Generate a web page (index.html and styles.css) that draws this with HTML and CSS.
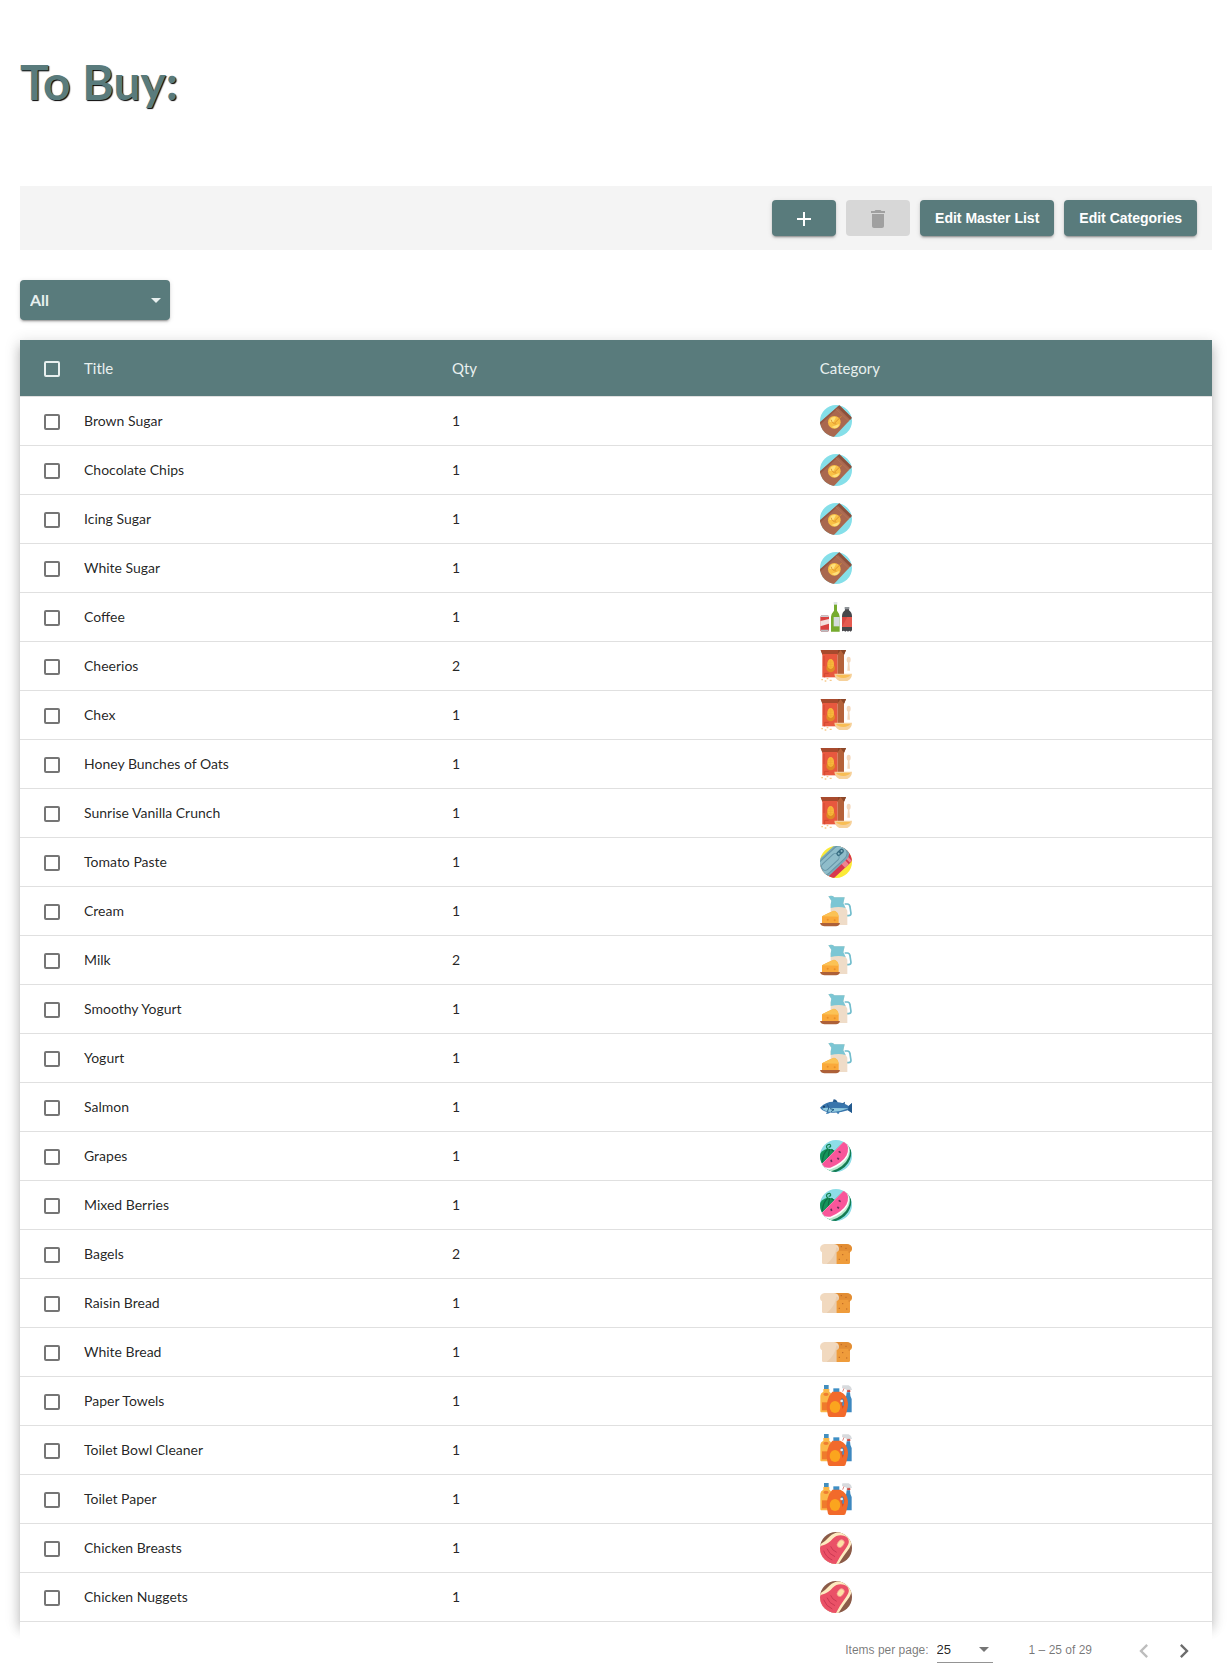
FILE: index.html
```html
<!DOCTYPE html>
<html lang="en">
<head>
<meta charset="utf-8">
<meta name="viewport" content="width=device-width, initial-scale=1">
<title>To Buy</title>
<link rel="stylesheet" href="styles.css">
</head>
<body>
<svg class="sprite" aria-hidden="true">
  <defs>
    <clipPath id="disc"><circle cx="48" cy="48" r="48"/></clipPath>
  </defs>
  <symbol id="baking" viewBox="0 0 96 96">
    <g clip-path="url(#disc)">
      <rect width="96" height="96" fill="#85dfe9"/>
      <path d="M-4 55 58 1 96 38 40 98 8 92z" fill="#a9684f"/>
      <path d="M-4 55 58 1 60 4 0 59z" fill="#955743"/>
      <path d="M58 1 96 38 91 44 52 7z" fill="#8c503c"/>
      <path d="M48 12 87 49" stroke="#b9775c" stroke-width="2"/>
      <circle cx="43" cy="52" r="19" fill="#f9c044"/>
      <path d="M28 50a15 15 0 0 1 20-13l-8 15zM34 66l24-9a16 16 0 0 1-14 13z" fill="#fde07c"/>
      <path d="M33 44q4 13 16 13M44 54 64 34" stroke="#dc9430" stroke-width="3" fill="none"/>
    </g>
  </symbol>
  <symbol id="drinks" viewBox="0 0 96 96">
    <path d="M4 43h20l3 5v40l-3 4H4l-3-4V48z" fill="#d9413f"/>
    <path d="M4 43h20l3 5H1z" fill="#c9d0d4"/>
    <path d="M1 60 27 54v14L1 76z" fill="#f3dfdc"/>
    <path d="M1 86h26l-3 6H4z" fill="#b9bfc3"/>
    <path d="M42 5h9v24q8 10 8 18v45H33V47q0-8 9-18z" fill="#76ab2f"/>
    <path d="M41 3h11v8H41z" fill="#dfe5e5"/>
    <path d="M41 48h18v28H41z" fill="#d4dbdc"/>
    <path d="M75 19h12v9q9 6 9 18v42l-4 4-4-3-4 3-4-3-4 3-4-3-6 2V46q0-12 9-18z" fill="#47474b"/>
    <path d="M74 18h14v7H74z" fill="#8f9498"/>
    <path d="M66 48h30v30H66z" fill="#d94843"/>
    <path d="M82 48h14v30H66z" fill="#e65a50"/>
  </symbol>
  <symbol id="cereal" viewBox="0 0 96 96">
    <path d="M2 0h76l-6 14H7z" fill="#8f4527"/>
    <path d="M7 12h46v70H7z" fill="#e8583e"/>
    <path d="M2 0h52v12H7z" fill="#a84a2d"/>
    <path d="M53 12 62 0l10 12v70H53z" fill="#b5623a"/>
    <path d="M62 0h16l-6 14z" fill="#8b4728"/>
    <circle cx="32" cy="54" r="13" fill="#e08a26"/>
    <ellipse cx="32" cy="42" rx="10" ry="15" fill="#f9b93c"/>
    <path d="M24 36h16M23 43h18M25 50h14M32 28v28" stroke="#eeaa35" stroke-width="2"/>
    <path d="M14 82V70h12M12 18v30" stroke="#d24732" stroke-width="3" fill="none"/>
    <ellipse cx="86" cy="29" rx="6" ry="9" fill="#f4d8bd"/>
    <path d="M84 34h4l2 28h-8z" fill="#f4d8bd"/>
    <path d="M43 71h53q0 15-14 22H58q-14-7-15-22z" fill="#f6d19b"/>
    <path d="M48 75h43q-5 8-21 9-17-1-22-9z" fill="#f8be55"/>
    <path d="M4 89h5M14 93h5M20 86h5M29 91h6" stroke="#f6c98b" stroke-width="4"/>
  </symbol>
  <symbol id="canned" viewBox="0 0 96 96">
    <g clip-path="url(#disc)">
      <rect width="96" height="96" fill="#fbea37"/>
      <g transform="rotate(-43 46 46)">
        <rect x="-24" y="20" width="124" height="60" rx="26" fill="#d8364f"/>
        <path d="M54 60h16v20H54zM75 60h8v18h-8z" fill="#ee8490"/>
        <rect x="-24" y="9" width="124" height="56" rx="26" fill="#7ba9b8"/>
        <rect x="-14" y="15" width="108" height="44" rx="21" fill="#8fbdca" stroke="#6796a8" stroke-width="3"/>
        <rect x="2" y="26" width="64" height="22" rx="11" fill="none" stroke="#6796a8" stroke-width="3"/>
        <rect x="62" y="29" width="26" height="14" rx="7" fill="#386d82"/>
        <circle cx="69" cy="36" r="3" fill="#8fbdca"/>
        <circle cx="81" cy="36" r="3" fill="#8fbdca"/>
      </g>
    </g>
  </symbol>
  <symbol id="dairy" viewBox="0 0 96 96">
    <path d="M74 27h8q7 0 8 9l3 19q0 7-8 7h-7" stroke="#72bdcd" stroke-width="5" fill="none"/>
    <path d="M25 4q12-4 18 3h31l-4 20 12 20v43H32V30L34 17z" fill="#efdcc8"/>
    <path d="M25 4q12-4 18 3h31l-4 18 7 14q-20-6-45 0V28l2-11z" fill="#7cc6d4"/>
    <path d="M6 64Q24 53 42 47q12 3 14 18v20H6z" fill="#faa93a"/>
    <path d="M6 64 42 47q12 3 14 18z" fill="#fbc255"/>
    <circle cx="23" cy="74" r="3" fill="#e98e28"/><circle cx="44" cy="76" r="3" fill="#e98e28"/>
    <path d="M0 84h60q-3 10-12 10H14Q3 94 0 84z" fill="#ad6038"/>
  </symbol>
  <symbol id="fish" viewBox="0 0 96 96">
    <path d="m38 34 3-9q10 1 12 10l16 1 6-4-1 8z" fill="#24598c"/>
    <path d="M22 60l-4 9q12 0 14-9zM48 62l6 8q6-2 4-10z" fill="#3f80b5"/>
    <path d="M0 50Q20 30 46 33q26 2 40 12l10-9v30l-12-8Q62 66 36 65 10 64 0 50z" fill="#3875ac"/>
    <path d="M6 53q10-4 26-2l54 1q-24 10-48 11Q14 62 6 53z" fill="#91cbe0"/>
    <path d="m86 45 10-9v30l-12-8z" fill="#245a8e"/>
    <path d="M22 40q9 10 0 22M30 53l12 3-9 6" stroke="#265b89" stroke-width="3" fill="none"/>
    <circle cx="12" cy="47" r="3" fill="#173c5c"/>
  </symbol>
  <symbol id="fruit" viewBox="0 0 96 96">
    <g clip-path="url(#disc)">
      <rect width="96" height="96" fill="#8ddde7"/>
      <circle cx="26" cy="55" r="29" fill="#15955b"/>
      <path d="M24 27Q8 40 7 67M29 27Q25 40 24 62M34 28q12 8 14 14" stroke="#0c7046" stroke-width="4" fill="none"/>
      <path d="M27 30q-12-9-5-15 9-5 10 3-2 6-6 2" stroke="#15844f" stroke-width="4" fill="none"/>
      <path d="M76 0q26 26 14 58T34 100Q14 104-2 78z" fill="#137c53"/>
      <path d="M76 0q22 26 9 54T34 94Q16 98 0 78z" fill="#b9e9ce"/>
      <path d="M76 0q18 27 6 50T32 88Q14 91 0 78z" fill="#fff"/>
      <path d="M76 0q15 26 3 47T31 83Q16 85 0 78z" fill="#f8569a"/>
      <path d="m56 34 6 4M52 54l5 4M33 59l2 7" stroke="#6e2c59" stroke-width="5"/>
    </g>
  </symbol>
  <symbol id="bread" viewBox="0 0 96 96">
    <path d="M24 18h56q16 2 16 15 0 7-6 10v31q0 4-4 4H44z" fill="#ef9c3b"/>
    <path d="M48 18h32q16 2 16 15l-4 5H52z" fill="#e28d34"/>
    <path d="M14 18h28q15 2 15 15 0 6-8 10v35H10q-4 0-4-4V43q-6-3-6-11 1-12 14-14z" fill="#f1d9bf"/>
    <path d="M49 28q-2 28-29 50h29V43q8-4 8-10z" fill="#eacdae"/>
    <path d="M62 26h4M76 31h4M86 42h3M66 50h4M56 64h4M78 66h4" stroke="#bd6725" stroke-width="3"/>
  </symbol>
  <symbol id="cleaning" viewBox="0 0 96 96">
    <path d="M12 0h14v13H12z" fill="#438fbe"/>
    <path d="M10 12h18v8q8 4 8 14v48H3q-3-2-2-8V32q0-8 9-12z" fill="#fbb748"/>
    <path d="M6 52h24v24H6z" fill="#ef7b2c"/>
    <ellipse cx="18" cy="28" rx="8" ry="5" fill="#ee7e31"/>
    <path d="M67 1h19q9 4 10 14H80l-8-5h-6z" fill="#d7dadd"/>
    <path d="m72 10-4 10M82 16h8v5h-8z" stroke="#c84a42" stroke-width="2" fill="#c84a42"/>
    <path d="M80 22h10q0 12 5 20v40H74V42q6-8 6-20z" fill="#3d88bf"/>
    <path d="M40 10h18v12H40z" fill="#3e8fc5"/>
    <path d="M37 20h24q20 8 23 34 1 12-8 40-2 2-5 2H30q-4 0-6-4-7-28-1-46 4-16 14-26z" fill="#f26a2b"/>
    <ellipse cx="45" cy="66" rx="16" ry="18" fill="#fba51e"/>
    <path d="M64 38q10 2 9 18l-5 16q-6-16-4-34z" fill="#d0502a"/>
    <path d="M65 42q6 4 4 20" stroke="#4d91c4" stroke-width="5" fill="none"/>
    <circle cx="65" cy="48" r="4" fill="#e6f1f7"/>
  </symbol>
  <symbol id="meat" viewBox="0 0 96 96">
    <g clip-path="url(#disc)">
      <rect width="96" height="96" fill="#8b5b48"/>
      <path d="M-4 40Q16 28 28 14 46-4 70 2q32 8 24 34-3 10-14 24T52 102L-8 94z" fill="#fdebc0"/>
      <path d="M2 42Q28 34 38 20q14-14 34-9 17 6 14 22-2 8-14 24T48 96H18Q-10 70 2 42z" fill="#ea5167"/>
      <ellipse cx="62" cy="35" rx="9" ry="13" transform="rotate(38 62 35)" fill="#fde0a5" stroke="#f18a8a" stroke-width="2"/>
      <path d="M32 43q4 12 18 18M21 50q6 17 24 24M11 56q7 20 26 28" stroke="#c93a53" stroke-width="3" fill="none"/>
    </g>
  </symbol>
</svg>

<main class="page">
  <h1 class="page-title">To Buy:</h1>

  <div class="toolbar">
    <button class="btn btn-icon" type="button" aria-label="Add item">
      <svg class="icon" viewBox="0 0 24 24"><path d="M19 13h-6v6h-2v-6H5v-2h6V5h2v6h6v2z"/></svg>
    </button>
    <button class="btn btn-icon" type="button" aria-label="Delete selected" disabled>
      <svg class="icon" viewBox="0 0 24 24"><path d="M6 19c0 1.1.9 2 2 2h8c1.1 0 2-.9 2-2V7H6v12zM19 4h-3.5l-1-1h-5l-1 1H5v2h14V4z"/></svg>
    </button>
    <button class="btn" type="button">Edit Master List</button>
    <button class="btn" type="button">Edit Categories</button>
  </div>

  <div class="filter">
    <select class="filter-select" aria-label="Filter by category"><option>All</option></select>
    <svg class="caret" viewBox="0 0 10 5" aria-hidden="true"><path d="M0 0h10L5 5z"/></svg>
  </div>

  <table class="items">
    <thead>
      <tr><th class="col-check"><input class="check" type="checkbox" aria-label="Select all"></th><th>Title</th><th>Qty</th><th class="col-category">Category</th></tr>
    </thead>
    <tbody>
      <tr><td><input class="check" type="checkbox" aria-label="Brown Sugar"></td><td class="text">Brown Sugar</td><td class="text">1</td><td><svg class="cat" role="img" aria-label="Baking"><use href="#baking"/></svg></td></tr>
      <tr><td><input class="check" type="checkbox" aria-label="Chocolate Chips"></td><td class="text">Chocolate Chips</td><td class="text">1</td><td><svg class="cat" role="img" aria-label="Baking"><use href="#baking"/></svg></td></tr>
      <tr><td><input class="check" type="checkbox" aria-label="Icing Sugar"></td><td class="text">Icing Sugar</td><td class="text">1</td><td><svg class="cat" role="img" aria-label="Baking"><use href="#baking"/></svg></td></tr>
      <tr><td><input class="check" type="checkbox" aria-label="White Sugar"></td><td class="text">White Sugar</td><td class="text">1</td><td><svg class="cat" role="img" aria-label="Baking"><use href="#baking"/></svg></td></tr>
      <tr><td><input class="check" type="checkbox" aria-label="Coffee"></td><td class="text">Coffee</td><td class="text">1</td><td><svg class="cat" role="img" aria-label="Drinks"><use href="#drinks"/></svg></td></tr>
      <tr><td><input class="check" type="checkbox" aria-label="Cheerios"></td><td class="text">Cheerios</td><td class="text">2</td><td><svg class="cat" role="img" aria-label="Cereal"><use href="#cereal"/></svg></td></tr>
      <tr><td><input class="check" type="checkbox" aria-label="Chex"></td><td class="text">Chex</td><td class="text">1</td><td><svg class="cat" role="img" aria-label="Cereal"><use href="#cereal"/></svg></td></tr>
      <tr><td><input class="check" type="checkbox" aria-label="Honey Bunches of Oats"></td><td class="text">Honey Bunches of Oats</td><td class="text">1</td><td><svg class="cat" role="img" aria-label="Cereal"><use href="#cereal"/></svg></td></tr>
      <tr><td><input class="check" type="checkbox" aria-label="Sunrise Vanilla Crunch"></td><td class="text">Sunrise Vanilla Crunch</td><td class="text">1</td><td><svg class="cat" role="img" aria-label="Cereal"><use href="#cereal"/></svg></td></tr>
      <tr><td><input class="check" type="checkbox" aria-label="Tomato Paste"></td><td class="text">Tomato Paste</td><td class="text">1</td><td><svg class="cat" role="img" aria-label="Canned goods"><use href="#canned"/></svg></td></tr>
      <tr><td><input class="check" type="checkbox" aria-label="Cream"></td><td class="text">Cream</td><td class="text">1</td><td><svg class="cat" role="img" aria-label="Dairy"><use href="#dairy"/></svg></td></tr>
      <tr><td><input class="check" type="checkbox" aria-label="Milk"></td><td class="text">Milk</td><td class="text">2</td><td><svg class="cat" role="img" aria-label="Dairy"><use href="#dairy"/></svg></td></tr>
      <tr><td><input class="check" type="checkbox" aria-label="Smoothy Yogurt"></td><td class="text">Smoothy Yogurt</td><td class="text">1</td><td><svg class="cat" role="img" aria-label="Dairy"><use href="#dairy"/></svg></td></tr>
      <tr><td><input class="check" type="checkbox" aria-label="Yogurt"></td><td class="text">Yogurt</td><td class="text">1</td><td><svg class="cat" role="img" aria-label="Dairy"><use href="#dairy"/></svg></td></tr>
      <tr><td><input class="check" type="checkbox" aria-label="Salmon"></td><td class="text">Salmon</td><td class="text">1</td><td><svg class="cat" role="img" aria-label="Fish"><use href="#fish"/></svg></td></tr>
      <tr><td><input class="check" type="checkbox" aria-label="Grapes"></td><td class="text">Grapes</td><td class="text">1</td><td><svg class="cat" role="img" aria-label="Fruit"><use href="#fruit"/></svg></td></tr>
      <tr><td><input class="check" type="checkbox" aria-label="Mixed Berries"></td><td class="text">Mixed Berries</td><td class="text">1</td><td><svg class="cat" role="img" aria-label="Fruit"><use href="#fruit"/></svg></td></tr>
      <tr><td><input class="check" type="checkbox" aria-label="Bagels"></td><td class="text">Bagels</td><td class="text">2</td><td><svg class="cat" role="img" aria-label="Bread"><use href="#bread"/></svg></td></tr>
      <tr><td><input class="check" type="checkbox" aria-label="Raisin Bread"></td><td class="text">Raisin Bread</td><td class="text">1</td><td><svg class="cat" role="img" aria-label="Bread"><use href="#bread"/></svg></td></tr>
      <tr><td><input class="check" type="checkbox" aria-label="White Bread"></td><td class="text">White Bread</td><td class="text">1</td><td><svg class="cat" role="img" aria-label="Bread"><use href="#bread"/></svg></td></tr>
      <tr><td><input class="check" type="checkbox" aria-label="Paper Towels"></td><td class="text">Paper Towels</td><td class="text">1</td><td><svg class="cat" role="img" aria-label="Household"><use href="#cleaning"/></svg></td></tr>
      <tr><td><input class="check" type="checkbox" aria-label="Toilet Bowl Cleaner"></td><td class="text">Toilet Bowl Cleaner</td><td class="text">1</td><td><svg class="cat" role="img" aria-label="Household"><use href="#cleaning"/></svg></td></tr>
      <tr><td><input class="check" type="checkbox" aria-label="Toilet Paper"></td><td class="text">Toilet Paper</td><td class="text">1</td><td><svg class="cat" role="img" aria-label="Household"><use href="#cleaning"/></svg></td></tr>
      <tr><td><input class="check" type="checkbox" aria-label="Chicken Breasts"></td><td class="text">Chicken Breasts</td><td class="text">1</td><td><svg class="cat" role="img" aria-label="Meat"><use href="#meat"/></svg></td></tr>
      <tr><td><input class="check" type="checkbox" aria-label="Chicken Nuggets"></td><td class="text">Chicken Nuggets</td><td class="text">1</td><td><svg class="cat" role="img" aria-label="Meat"><use href="#meat"/></svg></td></tr>
    </tbody>
  </table>

  <nav class="paginator" aria-label="Pagination">
    <label for="page-size">Items per page:</label>
    <div class="page-size">
      <select class="page-size-select" id="page-size"><option>25</option></select>
      <svg class="caret" viewBox="0 0 10 5" aria-hidden="true"><path d="M0 0h10L5 5z"/></svg>
    </div>
    <span class="range">1 – 25 of 29</span>
    <button class="page-btn" type="button" aria-label="Previous page" disabled>
      <svg viewBox="0 0 24 24"><path d="M15.41 7.41L14 6l-6 6 6 6 1.41-1.41L10.83 12z"/></svg>
    </button>
    <button class="page-btn" type="button" aria-label="Next page">
      <svg viewBox="0 0 24 24"><path d="M10 6L8.59 7.41 13.17 12l-4.58 4.59L10 18l6-6z"/></svg>
    </button>
  </nav>
</main>
</body>
</html>
```

FILE: styles.css
```css
:root {
  --teal: #597b7c;
  --line: #e0e0e0;
  --muted: rgba(0, 0, 0, 0.54);
}

* {
  box-sizing: border-box;
}

body {
  margin: 0;
  background: #fff;
  color: rgba(0, 0, 0, 0.87);
  font-family: Lato, sans-serif;
  font-size: 14px;
}

.sprite {
  position: absolute;
  width: 0;
  height: 0;
}

.page {
  padding: 52px 18px 0 20px;
}

.page-title {
  margin: 0 0 74px;
  color: var(--teal);
  font-size: 48px;
  font-weight: 700;
  line-height: 60px;
  text-shadow: 1px 1px 1px #000;
}

.toolbar {
  display: flex;
  align-items: center;
  justify-content: flex-end;
  gap: 10px;
  height: 64px;
  padding: 0 15px;
  background: #f4f4f4;
}

.btn {
  display: flex;
  align-items: center;
  justify-content: center;
  height: 36px;
  padding: 0 15px;
  border: 0;
  border-radius: 4px;
  background: var(--teal);
  color: #fff;
  font: 700 14px/36px "Liberation Sans", Arial, sans-serif;
  box-shadow: 0 3px 1px -2px rgba(0, 0, 0, 0.2), 0 2px 2px 0 rgba(0, 0, 0, 0.14), 0 1px 5px 0 rgba(0, 0, 0, 0.12);
}

.btn-icon {
  width: 64px;
  padding: 2px 0 0;
}

.btn:disabled {
  background: #d7d7d7;
  color: #a0a0a0;
  box-shadow: none;
}

.icon {
  width: 24px;
  height: 24px;
  fill: currentColor;
}

.filter,
.page-size {
  display: grid;
  align-items: center;
}

.filter > *,
.page-size > * {
  grid-area: 1 / 1;
}

.caret {
  justify-self: end;
  width: 10px;
  height: 5px;
  fill: currentColor;
  pointer-events: none;
}

.filter {
  width: 150px;
  margin: 30px 0 20px;
  color: #e8f0ef;
}

.filter .caret {
  margin-right: 9px;
}

.filter-select {
  width: 100%;
  height: 40px;
  padding: 0 10px 2px;
  appearance: none;
  border: 0;
  border-radius: 4px;
  background: var(--teal);
  color: inherit;
  font: 700 16px Lato, sans-serif;
  box-shadow: 0 3px 1px -2px rgba(0, 0, 0, 0.2), 0 2px 2px 0 rgba(0, 0, 0, 0.14), 0 1px 5px 0 rgba(0, 0, 0, 0.12);
}

.items {
  width: 100%;
  border-collapse: separate;
  border-spacing: 0;
  table-layout: fixed;
  background: #fff;
  box-shadow: 0 5px 5px -3px rgba(0, 0, 0, 0.2), 0 8px 10px 1px rgba(0, 0, 0, 0.14), 0 3px 14px 2px rgba(0, 0, 0, 0.12);
}

.items th,
.items td {
  height: 49px;
  padding: 0;
  border-bottom: 1px solid var(--line);
  text-align: left;
  vertical-align: middle;
}

.items .text {
  padding-bottom: 2px;
}

.items th {
  height: 57px;
  background: var(--teal);
  background-clip: padding-box;
  color: #e8f0ef;
  font-size: 15px;
  font-weight: 400;
}

.items .col-check {
  width: 64px;
}

.items .col-category {
  width: 32.9%;
}

.items th:first-child,
.items td:first-child {
  padding-left: 24px;
}

.check {
  display: block;
  width: 16px;
  height: 16px;
  margin: 2px 0 0;
  appearance: none;
  border: 2px solid #757575;
  border-radius: 2px;
}

th .check {
  border-color: #e8f0ef;
}

.check:checked {
  background: var(--teal);
}

.cat {
  display: block;
  width: 32px;
  height: 32px;
}

.paginator {
  position: relative;
  display: flex;
  align-items: center;
  justify-content: flex-end;
  height: 56px;
  padding-right: 8px;
  background: #fff;
  color: var(--muted);
  font: 12px "Liberation Sans", Arial, sans-serif;
}

.page-size {
  width: 56px;
  margin: 0 36px 0 8px;
  border-bottom: 1px solid #949494;
}

.page-size .caret {
  margin-right: 4px;
}

.page-size-select {
  width: 100%;
  height: 24px;
  padding: 0;
  appearance: none;
  border: 0;
  background: transparent;
  color: rgba(0, 0, 0, 0.87);
  font: 13px "Liberation Sans", Arial, sans-serif;
}

.range {
  margin-right: 32px;
}

.page-btn {
  display: flex;
  align-items: center;
  justify-content: center;
  width: 40px;
  height: 40px;
  padding: 2px 0 0;
  border: 0;
  background: transparent;
  color: #6c6c6c;
}

.page-btn:disabled {
  color: #bdbdbd;
}

.page-btn svg {
  width: 28px;
  height: 28px;
  fill: currentColor;
}
```
